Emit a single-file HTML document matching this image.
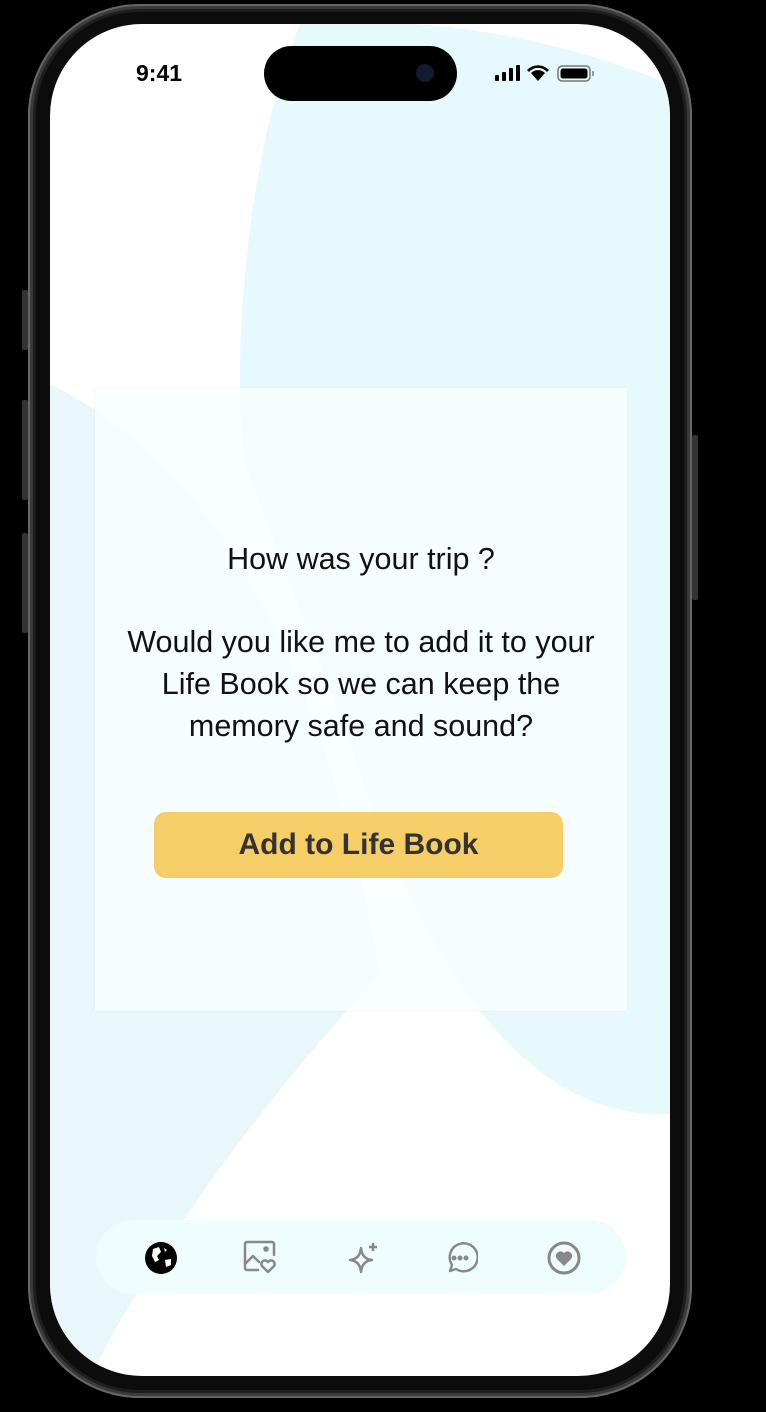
<!DOCTYPE html>
<html><head><meta charset="utf-8"><style>
html,body{margin:0;padding:0;background:#000;width:766px;height:1412px;overflow:hidden;font-family:"Liberation Sans",sans-serif}
.frame{position:absolute;left:28px;top:4px;width:664px;height:1394px;border-radius:112px;background:#0c0c0c;box-shadow:inset 0 0 0 2px #666,inset 0 0 0 5px #3a3a3a,inset 0 0 0 8px #1e1e1e}
.btn{position:absolute;width:6px;background:#333;border-radius:2px;left:22px}
.screen{position:absolute;left:50px;top:24px;width:620px;height:1352px;border-radius:92px;background:#fff;overflow:hidden}
.island{position:absolute;left:214px;top:22px;width:193px;height:55px;border-radius:28px;background:#000}
.time{position:absolute;left:86px;top:36px;font-size:23px;font-weight:bold;color:#000}
.card{position:absolute;left:45px;top:364px;width:532px;height:623px;background:rgba(248,254,255,.85);box-shadow:0 0 2px rgba(0,0,0,.06)}
.txt{position:absolute;left:0;width:532px;text-align:center;font-size:30.5px;color:#111;line-height:42px}
.b{position:absolute;left:59px;top:424px;width:409px;height:66px;border-radius:12px;background:#F6CE67;text-align:center;line-height:66px;font-size:30px;font-weight:bold;color:#333}
.nav{position:absolute;left:46px;top:1196px;width:530px;height:74px;border-radius:37px;background:#effcfd}
</style></head><body>
<div class="btn" style="top:290px;height:60px"></div>
<div class="btn" style="top:400px;height:100px"></div>
<div class="btn" style="top:533px;height:100px"></div>
<div class="btn" style="left:692px;top:435px;height:165px"></div>
<div class="frame"></div>
<div class="screen">
<svg width="620" height="1352" style="position:absolute;left:0;top:0">
<path d="M250 0 C200 120 180 320 195 440 L300 720 C360 900 450 1080 600 1090 L620 1090 L620 60 C520 20 400 -10 250 0Z" fill="#e6f9fc"/>
<path d="M0 360 C120 420 260 560 330 950 C220 1070 120 1200 40 1352 L0 1352Z" fill="#e9f7fb"/>
</svg>
<div class="island"><div style="position:absolute;left:152px;top:18px;width:18px;height:18px;border-radius:9px;background:#111a2e"></div></div>
<div class="time">9:41</div>
<svg style="position:absolute;left:444px;top:40px" width="120" height="20">
<rect x="1" y="11" width="4" height="6" rx="1"/><rect x="8" y="8" width="4" height="9" rx="1"/><rect x="15" y="4" width="4" height="13" rx="1"/><rect x="22" y="1" width="4" height="16" rx="1"/>
<path d="M44 17 L37 9 A10 10 0 0 1 51 9Z M33 6 A15 15 0 0 1 55 6 L53 8 A12 12 0 0 0 35 8Z"/>
<rect x="64" y="2" width="32" height="15" rx="4" fill="none" stroke="#777" stroke-width="1.5"/><rect x="66.5" y="4.5" width="27" height="10" rx="2.5"/><rect x="98" y="7" width="2" height="5" fill="#999"/>
</svg>
<div class="card">
<div class="txt" style="top:150px">How was your trip ?</div>
<div class="txt" style="top:233px">Would you like me to add it to your<br>Life Book so we can keep the<br>memory safe and sound?</div>
<div class="b">Add to Life Book</div>
</div>
<div class="nav">
<svg style="position:absolute;left:47px;top:20px" width="36" height="36" viewBox="0 0 36 36"><circle cx="18" cy="18" r="16"/><path d="M10 9 L16 7 L18 12 L14 16 L16 20 L12 22 L9 16Z M22 20 L28 19 L28 25 L23 27Z M21 8 L24 10 L22 12Z" fill="#fff"/></svg>
<svg style="position:absolute;left:146px;top:18px" width="36" height="36" viewBox="0 0 36 36" fill="none" stroke="#888" stroke-width="2.5" stroke-linejoin="round" stroke-linecap="round"><path d="M16 32 H5 A2 2 0 0 1 3 30 V6 A2 2 0 0 1 5 4 H30 A2 2 0 0 1 32 6 V17"/><path d="M3 26 L11 18 L17 24"/><circle cx="24" cy="11" r="1.5" fill="#888"/><path d="M26 34 L20 28 A3 3 0 0 1 26 24 A3 3 0 0 1 32 28Z"/></svg>
<svg style="position:absolute;left:250px;top:20px" width="36" height="36" viewBox="0 0 36 36" fill="none" stroke="#888" stroke-width="2.5" stroke-linejoin="round"><path d="M15 8 Q16 19 26 20 Q16 21 15 32 Q14 21 4 20 Q14 19 15 8Z"/><path d="M27 3 V11 M23 7 H31"/></svg>
<svg style="position:absolute;left:346px;top:20px" width="36" height="36" viewBox="0 0 36 36" fill="none" stroke="#888" stroke-width="2.5"><path d="M8 31 L10 25 A14 14 0 1 1 14 29 Z" stroke-linejoin="round"/><circle cx="12" cy="18" r="1.3" fill="#888"/><circle cx="18" cy="18" r="1.3" fill="#888"/><circle cx="24" cy="18" r="1.3" fill="#888"/></svg>
<svg style="position:absolute;left:450px;top:20px" width="36" height="36" viewBox="0 0 36 36"><circle cx="18" cy="18" r="15" fill="none" stroke="#888" stroke-width="3"/><path d="M18 26 L11 19 A4 4 0 0 1 18 13 A4 4 0 0 1 25 19Z" fill="#888"/></svg>
</div>
</div>
</body></html>
